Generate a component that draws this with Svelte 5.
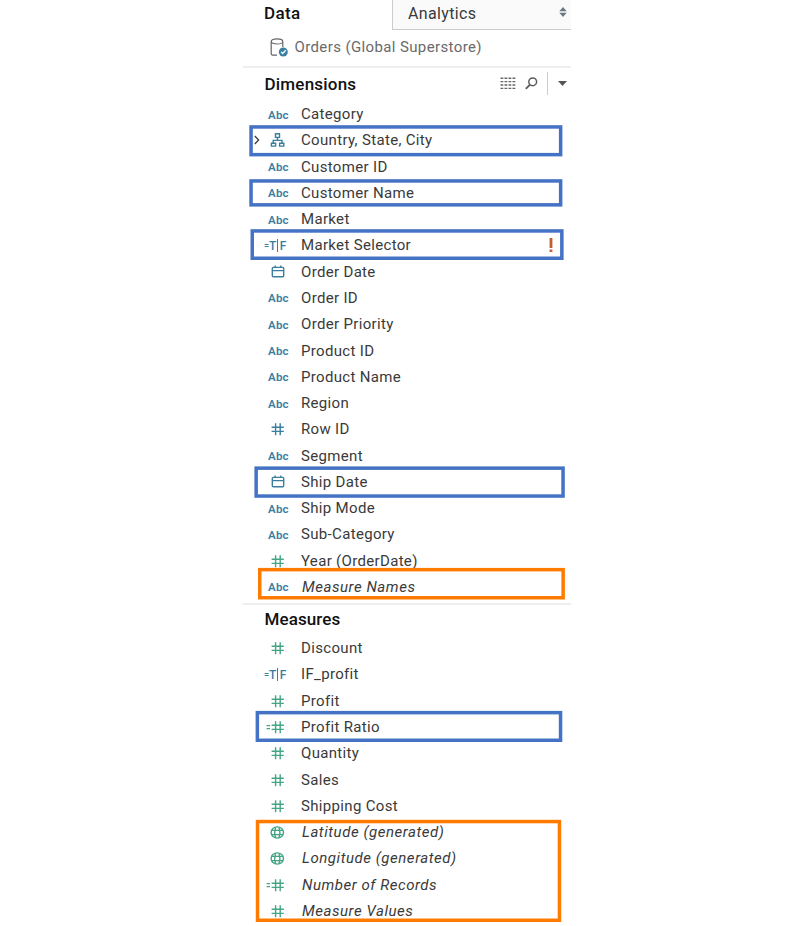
<script>
  const dimensions = [
    ['abc', 'Category'],
    ['tree', 'Country, State, City'],
    ['abc', 'Customer ID'],
    ['abc', 'Customer Name'],
    ['abc', 'Market'],
    ['tf', 'Market Selector'],
    ['date', 'Order Date'],
    ['abc', 'Order ID'],
    ['abc', 'Order Priority'],
    ['abc', 'Product ID'],
    ['abc', 'Product Name'],
    ['abc', 'Region'],
    ['num', 'Row ID', 'blue'],
    ['abc', 'Segment'],
    ['date', 'Ship Date'],
    ['abc', 'Ship Mode'],
    ['abc', 'Sub-Category'],
    ['num', 'Year (OrderDate)', 'green'],
    ['abc', 'Measure Names', 'blue', true]
  ];
  const measures = [
    ['num', 'Discount', 'green'],
    ['tf', 'IF_profit'],
    ['num', 'Profit', 'green'],
    ['calc', 'Profit Ratio', 'green'],
    ['num', 'Quantity', 'green'],
    ['num', 'Sales', 'green'],
    ['num', 'Shipping Cost', 'green'],
    ['geo', 'Latitude (generated)', 'green', true],
    ['geo', 'Longitude (generated)', 'green', true],
    ['calc', 'Number of Records', 'green', true],
    ['num', 'Measure Values', 'green', true]
  ];
  // Callout frames: left, top, right, bottom, colour
  const frames = [
    [249.3, 125.2, 562.4, 156.4, '#4472c4'],
    [249.3, 179.2, 562.4, 206.6, '#4472c4'],
    [250.5, 229.2, 563.6, 260, '#4472c4'],
    [254.4, 466.4, 564.8, 497.8, '#4472c4'],
    [258, 567.9, 564.9, 599.5, '#ff7b00'],
    [255.6, 710.9, 562.3, 742, '#4472c4'],
    [255.8, 819.8, 561.2, 922, '#ff7b00']
  ];
</script>

{#snippet field([kind, label, tone = 'blue', italic = false])}
  <li>
    <span class="icon {tone}">
      {#if kind === 'abc'}
        <span class="abc">Abc</span>
      {:else if kind === 'tf'}
        <span class="tf"><i>=</i>T<span class="bar"></span>F</span>
      {:else}
        <svg width="34" height="18" viewBox="0 0 34 18" fill="none" stroke="currentColor" stroke-width="1.4">
          {#if kind === 'tree'}
            <path class="chevron" d="M-.2 4.9 3.6 8.9-.2 12.9" />
            <path d="M20.5 2.8h4v3.6h-4zM22.5 6.4v3M18.2 12.2V9.4h8.8v2.8M16.4 12.2h4.2v2.9h-4.2zM24.6 12.2h4.2v2.9h-4.2z" />
          {:else if kind === 'date'}
            <rect x="17.3" y="4.4" width="11.4" height="9.4" rx="1" />
            <path d="M17.3 7.6h11.4M20.2 2.4v2.6M25.8 2.4v2.6" />
          {:else if kind === 'geo'}
            <ellipse cx="22.3" cy="9.5" rx="6.2" ry="5.6" />
            <path d="M20.6 4.2C19.6 7.2 19.6 11.8 20.6 14.8M24 4.2C25 7.2 25 11.8 24 14.8M16.6 7.4h11.4M16.6 11.6h11.4" />
          {:else}
            <path d="M20.6 3.2v12M25.2 3.2v12M16.6 7.2h12.2M16.6 11.4h12.2" />
            {#if kind === 'calc'}<path d="M11.6 7.6h3.4M11.6 10.6h3.4" />{/if}
          {/if}
        </svg>
      {/if}
    </span>
    <span class="label" class:italic>{label}</span>
    {#if label === 'Market Selector'}
      <svg class="warn" width="4" height="15" viewBox="0 0 4 15" fill="#bf6034"><path d="M.6 0h2.8v10H.6zM.6 11.6h2.8v2.4H.6z" /></svg>
    {/if}
  </li>
{/snippet}

<main>
  <section class="pane">
    <div class="tabs">
      <div class="tab active">Data</div>
      <div class="tab other">
        Analytics
        <svg width="8" height="10" viewBox="0 0 8 10" fill="#6b7785"><path d="M.3 4.3 4 0l3.7 4.3zM.3 5.7 4 10l3.7-4.3z" /></svg>
      </div>
    </div>

    <div class="source">
      <svg width="19" height="20" viewBox="0 0 19 20" fill="none" stroke="#666" stroke-width="1.2">
        <path d="M1.2 4v11.4c0 1.2 1 1.8 2.6 1.8H7M12.8 4v5" />
        <ellipse cx="7" cy="3.4" rx="5.8" ry="2.6" />
        <circle cx="13.3" cy="14" r="4.5" fill="#3a7fa3" stroke="none" />
        <path d="m11.1 13.9 1.6 1.6 3-3.2" stroke="#fff" stroke-width="1.3" />
      </svg>
      <span>Orders (Global Superstore)</span>
    </div>

    <header class="dims">
      <h2>Dimensions</h2>
      <svg class="grid" width="16" height="13" viewBox="0 0 16 13" stroke="#666" stroke-width="1.4">
        <path d="M.5 1.2h15M.5 4.6h15M.5 8h15M.5 11.4h15" stroke-dasharray="2.8 1.2" />
      </svg>
      <svg class="search" width="13" height="13" viewBox="0 0 13 13" fill="none" stroke="#5c5c5c" stroke-width="1.5">
        <circle cx="7.7" cy="4.8" r="3.9" /><path d="M5 7.6.8 11.8" stroke-width="1.9" />
      </svg>
      <span class="rule"></span>
      <svg width="9" height="5" viewBox="0 0 9 5" fill="#555"><path d="M0 0h9L4.5 5z" /></svg>
    </header>
    <ul>{#each dimensions as d}{@render field(d)}{/each}</ul>

    <header class="meas"><h2>Measures</h2></header>
    <ul>{#each measures as m}{@render field(m)}{/each}</ul>
  </section>

  <svg class="callouts" width="795" height="926" fill="none">
    {#each frames as [l, t, r, b, color]}
      <rect x={l + 1.75} y={t + 1.75} width={r - l - 3.5} height={b - t - 3.5} stroke={color} stroke-width="3.5" />
    {/each}
  </svg>
</main>

<style>
  :global(body) { background: #fff; }
  main {
    position: relative;
    width: 795px;
    height: 926px;
    overflow: hidden;
    background: #fff;
    font: 15px/20px Roboto, "Liberation Sans", sans-serif;
    color: #3a3a3a;
  }
  .pane { width: 328px; margin-left: 243px; }
  .tabs { display: flex; height: 30px; }
  .tab { box-sizing: border-box; line-height: 26px; font-size: 16px; }
  .active { width: 149px; padding-left: 21px; font-weight: 500; color: #111; font-size: 17px; letter-spacing: .4px; }
  .other {
    flex: 1;
    display: flex;
    justify-content: space-between;
    padding: 0 4px 0 15px;
    border-left: 1px solid #ccc;
    border-bottom: 1px solid #ccc;
    background: #fafafa;
    line-height: 27px;
    letter-spacing: .35px;
  }
  .other svg { margin-top: 7px; }
  .source {
    box-sizing: border-box;
    height: 38px;
    display: flex;
    align-items: center;
    padding: 0 0 2px 27px;
    border-bottom: 2px solid #eee;
    color: #6a6a6a;
    letter-spacing: .38px;
  }
  .source svg { margin: 2px 5.5px 0 0; }
  h2 { margin: 0; flex: 1; font-size: 17px; font-weight: 500; color: #111; letter-spacing: .2px; }
  header { display: flex; align-items: center; box-sizing: border-box; }
  .dims { height: 33px; padding: 0 4px 2px 21.5px; }
  .meas { height: 32px; padding: 0 0 3px 21.5px; border-top: 2px solid #eee; margin-top: 3px; }
  .meas h2 { letter-spacing: .1px; }
  .search { margin-left: 9px; }
  .rule { width: 1px; height: 23px; margin: 0 10px 0 9px; background: #ccc; }
  ul { list-style: none; margin: 0; padding: 0; }
  li { display: flex; align-items: center; height: 26.28px; }
  .icon { display: flex; width: 46px; padding-left: 12px; box-sizing: border-box; }
  .icon svg { overflow: visible; }
  .blue { color: #3a7d9f; }
  .green { color: #44a583; }
  .chevron { stroke: #444; }
  .abc { margin: 1px 0 0 13px; font-size: 11.5px; font-weight: 600; letter-spacing: .2px; }
  .tf { display: flex; align-items: center; margin: 1px 0 0 9px; font-size: 12px; font-weight: 500; }
  .tf i { width: 5px; font-size: 9px; font-style: normal; }
  .bar { width: 1px; height: 13px; margin: 0 1.5px 0 1px; background: currentColor; }
  .label { margin-left: 12px; letter-spacing: .33px; flex: 1; white-space: nowrap; }
  .italic { font-style: italic; padding-left: 1px; letter-spacing: .55px; }
  .warn { margin-right: 18px; }
  .callouts { position: absolute; inset: 0; }
</style>
